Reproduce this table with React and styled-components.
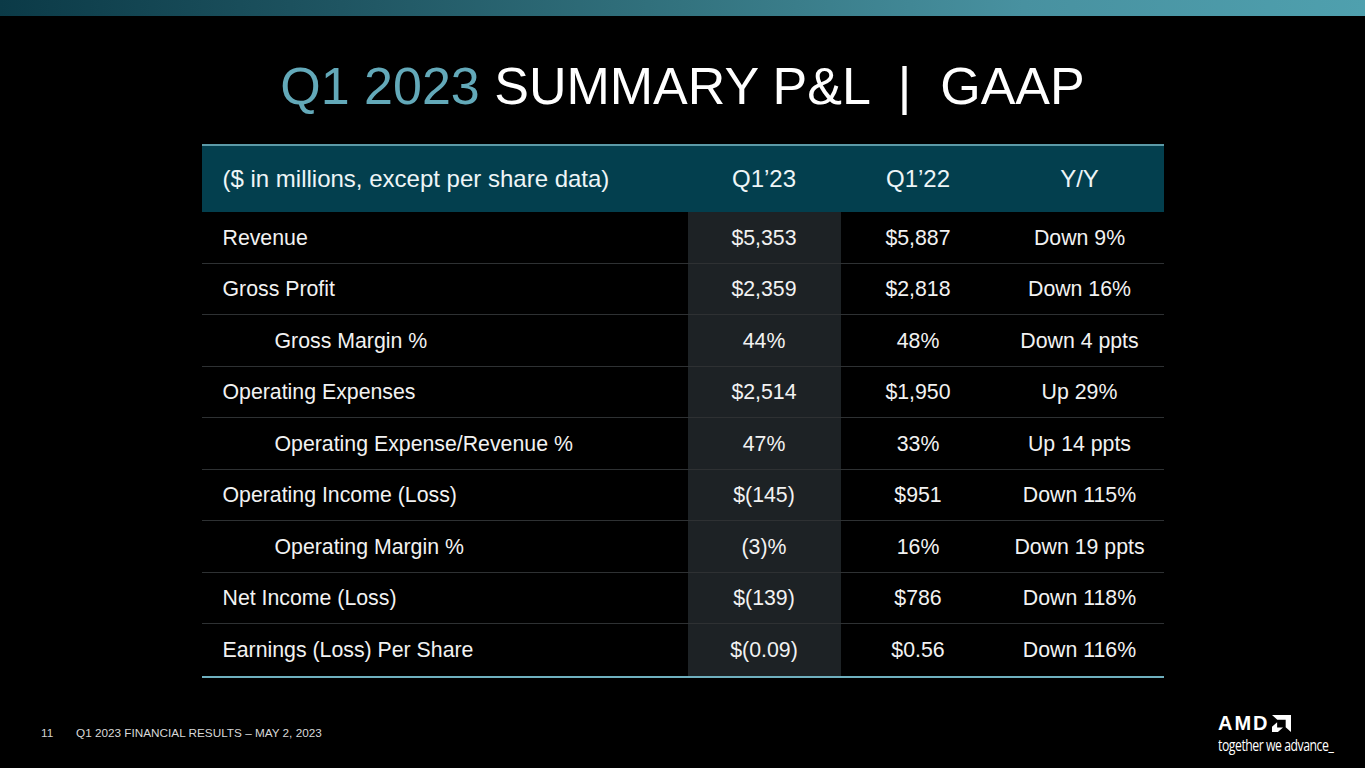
import React from "react";
import styled, { createGlobalStyle } from "styled-components";

const Global = createGlobalStyle`
  html, body { margin: 0; padding: 0; background: #000; }
  body { font-family: "Liberation Sans", Arial, sans-serif; color: #fff; }
`;

const Slide = styled.div`
  width: 1365px;
  height: 768px;
  background: #000;
  display: flex;
  flex-direction: column;
  overflow: hidden;
`;

const TopBar = styled.div`
  height: 16px;
  flex: none;
  background: linear-gradient(90deg, #0b3a47 0%, #1f5562 25%, #33737f 50%, #4891a0 75%, #4fa0ae 100%);
`;

const Title = styled.h1`
  margin: 40px 0 0;
  height: 60px;
  font-size: 52px;
  line-height: 60px;
  font-weight: 400;
  text-align: center;
  color: #ffffff;
  white-space: pre;
`;

const Accent = styled.span`
  color: #63a9b9;
`;

const Table = styled.div`
  margin: 28px auto 0;
  width: 962px;
  display: grid;
  grid-template-columns: 486px 153px 155px 168px;
  border-top: 2px solid #5c9aa7;
  border-bottom: 2px solid #6fb0bf;
`;

const HeadCell = styled.div`
  height: 66px;
  background: #033f4e;
  display: flex;
  align-items: center;
  justify-content: ${(p) => (p.$left ? "flex-start" : "center")};
  padding-left: ${(p) => (p.$left ? "21px" : "0")};
  font-size: 24px;
  color: #eef5f7;
`;

const Cell = styled.div`
  height: 50.5px;
  padding-top: 2px;
  box-sizing: border-box;
  height: 51.5px;
  display: flex;
  align-items: center;
  justify-content: ${(p) => (p.$left ? "flex-start" : "center")};
  padding-left: ${(p) => (p.$left ? (p.$indent ? "73px" : "21px") : "0")};
  background: ${(p) => (p.$hl ? "#1d2225" : "#000")};
  border-bottom: ${(p) => (p.$last ? "none" : "1px solid #2e3133")};
  font-size: 21.3px;
  color: #f2f2f2;
`;

const Footer = styled.div`
  margin-top: auto;
  display: flex;
  align-items: flex-start;
  padding: 0 31px 14px 41px;
`;

const PageNum = styled.span`
  margin-top: 12px;
  width: 35px;
  font-size: 11.75px;
  color: #d0d0d0;
`;

const FooterText = styled.span`
  margin-top: 12px;
  font-size: 11.75px;
  color: #d8d8d8;
  flex: 1;
`;

const Logo = styled.div`
  display: flex;
  flex-direction: column;
  width: 116px;
`;

const LogoTop = styled.div`
  display: flex;
  align-items: center;
  gap: 2px;
  height: 18px;
`;

const Wordmark = styled.span`
  font-size: 20px;
  font-weight: 700;
  letter-spacing: 2px;
  line-height: 18px;
  color: #fff;
`;

const Tagline = styled.span`
  margin-top: 4px;
  font-family: "Open Sans", "Liberation Sans", sans-serif;
  font-size: 16px;
  line-height: 18px;
  letter-spacing: -0.6px;
  color: #fff;
  white-space: nowrap;
  transform: scaleX(0.765);
  transform-origin: left center;
`;

const rows = [
  ["Revenue", "$5,353", "$5,887", "Down 9%"],
  ["Gross Profit", "$2,359", "$2,818", "Down 16%"],
  ["Gross Margin %", "44%", "48%", "Down 4 ppts", true],
  ["Operating Expenses", "$2,514", "$1,950", "Up 29%"],
  ["Operating Expense/Revenue %", "47%", "33%", "Up 14 ppts", true],
  ["Operating Income (Loss)", "$(145)", "$951", "Down 115%"],
  ["Operating Margin %", "(3)%", "16%", "Down 19 ppts", true],
  ["Net Income (Loss)", "$(139)", "$786", "Down 118%"],
  ["Earnings (Loss) Per Share", "$(0.09)", "$0.56", "Down 116%"],
];

function AmdArrow() {
  return (
    <svg width="19" height="17" viewBox="0 0 100 100" preserveAspectRatio="none">
      <path d="M0 0 H100 V100 L72 72 V28 H28 Z" fill="#fff" />
      <path d="M27 42 L0 69 V100 H31 L58 73 H27 Z" fill="#fff" />
    </svg>
  );
}

export default function App() {
  return (
    <>
      <Global />
      <Slide>
        <TopBar />
        <Title>
          <Accent>Q1 2023</Accent> SUMMARY P&amp;L  |  GAAP
        </Title>
        <Table>
          <HeadCell $left>($ in millions, except per share data)</HeadCell>
          <HeadCell>Q1’23</HeadCell>
          <HeadCell>Q1’22</HeadCell>
          <HeadCell>Y/Y</HeadCell>
          {rows.map((r, i) => {
            const last = i === rows.length - 1;
            return (
              <React.Fragment key={r[0]}>
                <Cell $left $indent={r[4]} $last={last}>{r[0]}</Cell>
                <Cell $hl $last={last}>{r[1]}</Cell>
                <Cell $last={last}>{r[2]}</Cell>
                <Cell $last={last}>{r[3]}</Cell>
              </React.Fragment>
            );
          })}
        </Table>
        <Footer>
          <PageNum>11</PageNum>
          <FooterText>Q1 2023 FINANCIAL RESULTS – MAY 2, 2023</FooterText>
          <Logo>
            <LogoTop>
              <Wordmark>AMD</Wordmark>
              <AmdArrow />
            </LogoTop>
            <Tagline>together we advance_</Tagline>
          </Logo>
        </Footer>
      </Slide>
    </>
  );
}
